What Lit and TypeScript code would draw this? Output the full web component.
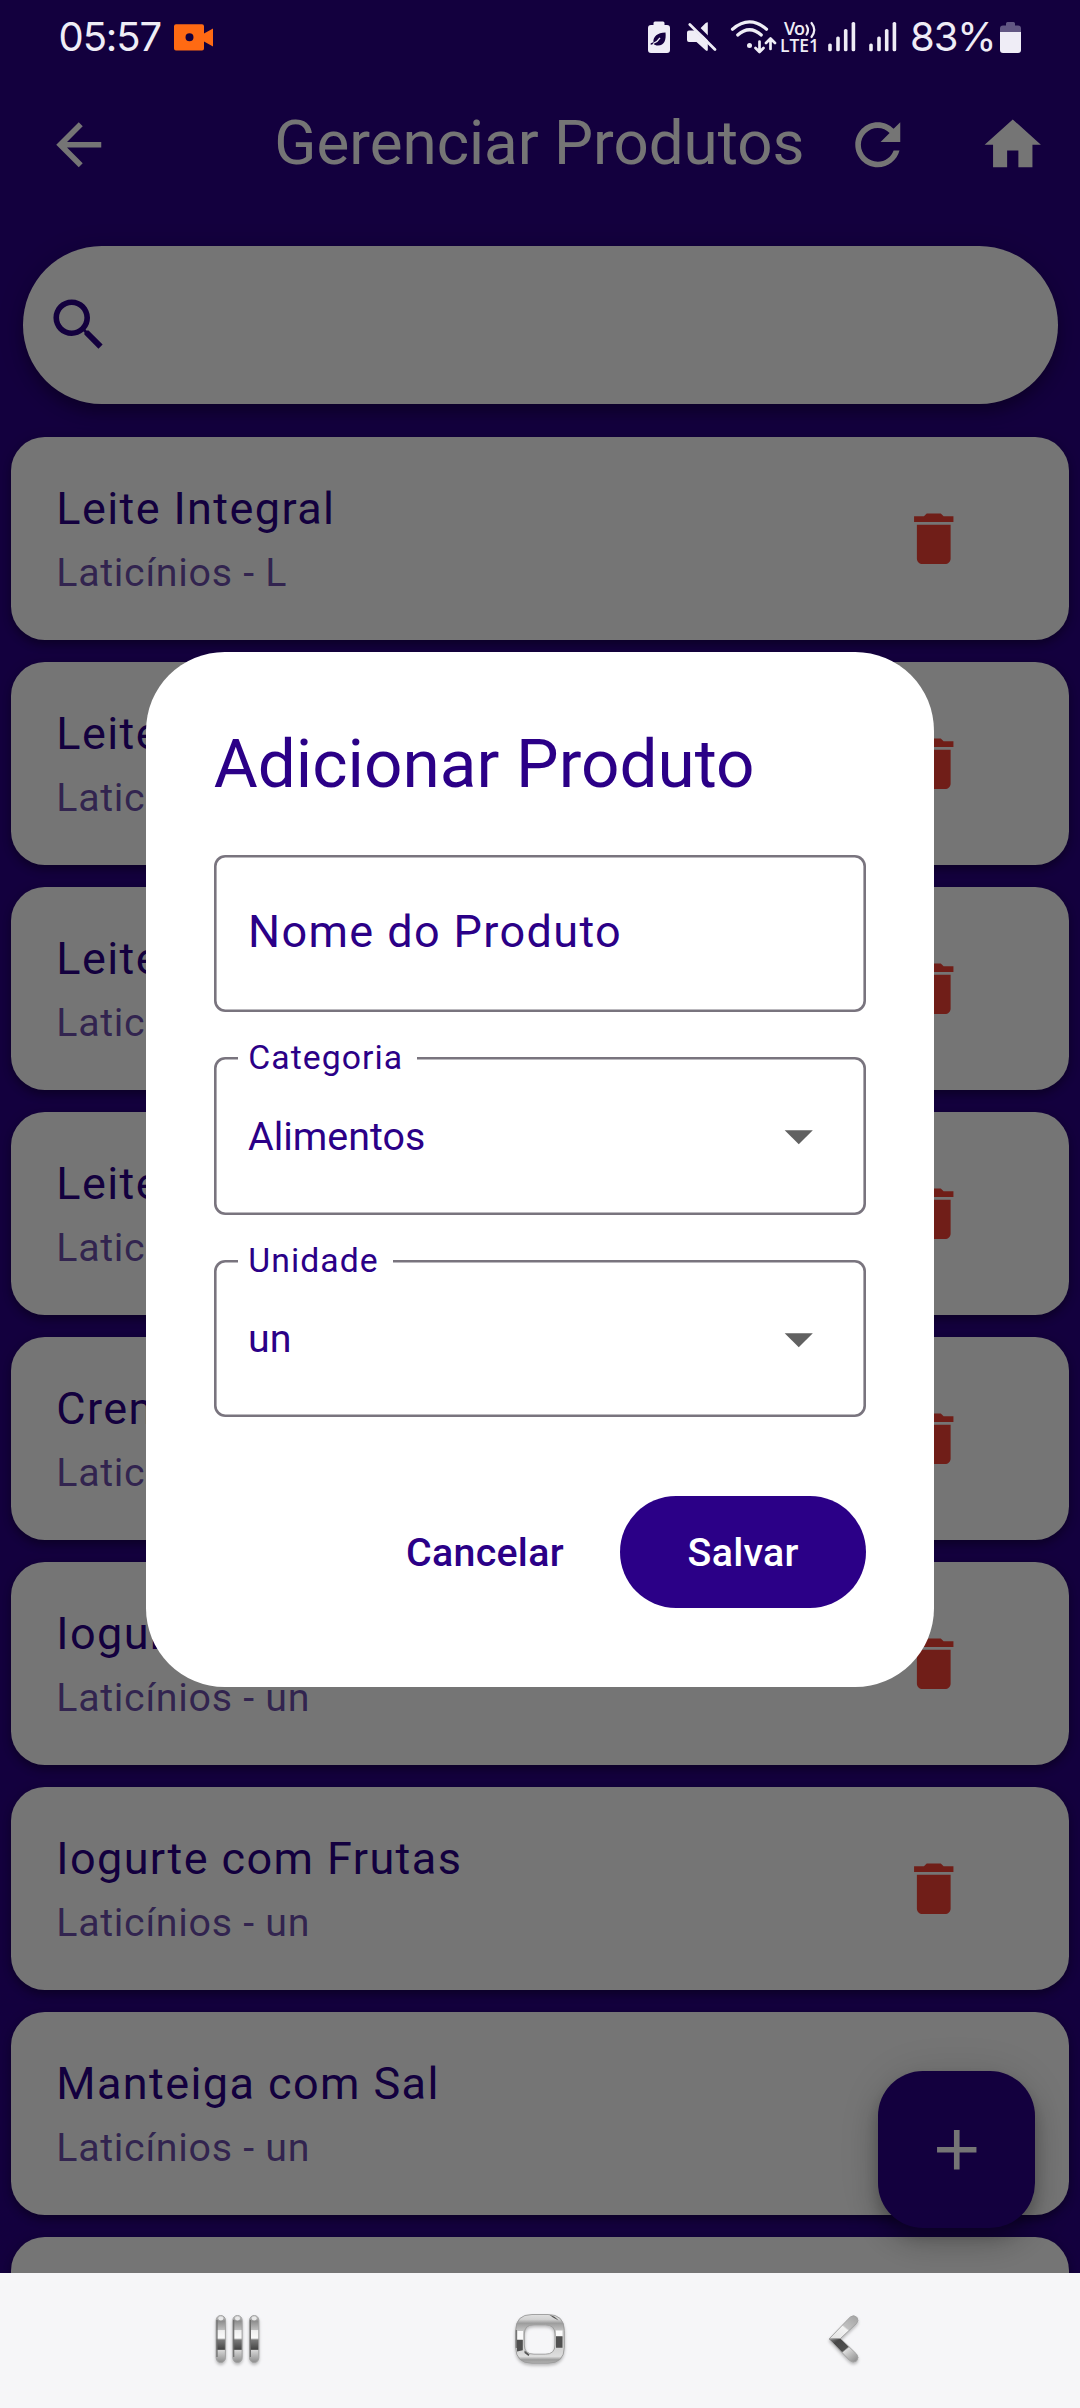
import { LitElement, html, css, svg } from "lit";
import { customElement, property } from "lit/decorators.js";

const ICONS: Record<string, string> = {
  back: "M20 11H7.83l5.59-5.59L12 4l-8 8 8 8 1.41-1.41L7.83 13H20v-2z",
  refresh:
    "M17.65 6.35C16.2 4.9 14.21 4 12 4c-4.42 0-7.99 3.58-7.99 8s3.57 8 7.99 8c3.73 0 6.84-2.55 7.73-6h-2.08c-.82 2.33-3.04 4-5.65 4-3.31 0-6-2.69-6-6s2.69-6 6-6c1.66 0 3.14.69 4.22 1.78L13 11h7V4l-2.35 2.35z",
  home: "M10 20v-6h4v6h5v-8h3L12 3 2 12h3v8z",
  search:
    "M15.5 14h-.79l-.28-.27C15.41 12.59 16 11.11 16 9.5 16 5.91 13.09 3 9.5 3S3 5.91 3 9.5 5.91 16 9.5 16c1.61 0 3.09-.59 4.23-1.57l.27.28v.79l5 4.99L20.49 19l-4.99-5zm-6 0C7.01 14 5 11.99 5 9.5S7.01 5 9.5 5 14 7.01 14 9.5 11.99 14 9.5 14z",
  delete: "M6 19c0 1.1.9 2 2 2h8c1.1 0 2-.9 2-2V7H6v12zM19 4h-3.5l-1-1h-5l-1 1H5v2h14V4z",
  add: "M19 13h-6v6h-2v-6H5v-2h6V5h2v6h6v2z",
  drop: "M7 10l5 5 5-5z",
};

@customElement("md-icon")
export class MdIcon extends LitElement {
  @property() name = "";
  static styles = css`
    :host { display: block; flex: none; width: 67.5px; height: 67.5px; }
    .glyph { display: block; width: 100%; height: 100%; fill: currentColor; }
  `;
  render() {
    return html`<svg class="glyph" viewBox="0 0 24 24"><path d=${ICONS[this.name]}></path></svg>`;
  }
}

@customElement("status-bar")
export class StatusBar extends LitElement {
  static styles = css`
    :host {
      display: flex; align-items: center; justify-content: space-between; height: 66px;
      padding: 0 50px 0 58.5px; color: #efedf6; box-sizing: border-box;
      font: 400 40px/66px Inter, "Open Sans", sans-serif;
    }
    .side { display: flex; align-items: center; height: 66px; }
    .time { padding-top: 7px; width: 109.5px; letter-spacing: -1.1px; }
    .percent { padding-top: 7px; width: 86px; letter-spacing: -1.1px; }
    .slice { display: block; height: 66px; flex: none; }
    .vo { font: 600 18px "Open Sans", "Noto Sans", sans-serif; fill: #efedf6; }
    .lte { font: 600 17.5px "Open Sans", "Noto Sans", sans-serif; fill: #efedf6; }
  `;
  private bars(x: number) {
    return svg`<g fill="#efedf6">
      <rect x=${x} y="43.5" width="3.6" height="7.8" rx="1.6"></rect>
      <rect x=${x + 8} y="36.5" width="3.6" height="14.8" rx="1.6"></rect>
      <rect x=${x + 15.7} y="29" width="3.6" height="22.3" rx="1.6"></rect>
      <rect x=${x + 23.4} y="22" width="3.6" height="29.3" rx="1.6"></rect></g>`;
  }
  render() {
    return html`
      <div class="side">
        <span class="time">05:57</span>
        <svg class="slice" width="50" viewBox="168 0 50 66">
          <path fill="#ff6a13" fill-rule="evenodd"
            d="M176 24.3h26a2 2 0 0 1 2 2v7.2l9-5v18l-9-5v7a2 2 0 0 1-2 2h-26a2 2 0 0 1-2-2v-22.200a2 2 0 0 1 2-2zM189.500 33.300a4 4 0 1 0 0 8 4 4 0 0 0 0-8z"></path>
        </svg>
      </div>
      <div class="side">
        <svg class="slice" width="40" viewBox="640 0 40 66">
          <path fill="#efedf6" d="M655 21.500h8q1.500 0 1.500 1.500v2h2.500q3 0 3 3v22q0 3-3 3h-16q-3 0-3-3v-22q0-3 3-3h2.500v-2q0-1.500 1.500-1.500z"></path>
          <path fill="#150040" d="M665.500 32.500c.8 7-1 13-7.500 13-2 0-3.600-.6-4.700-1.800-.9.500-1.600.9-2.600 1.100v-1.500c1-.3 2-.7 2.700-1.300-.2-5.200 3.800-9.300 12.100-9.500z"></path>
          <path fill="none" stroke="#efedf6" stroke-width="1.300" d="M653 43.500c3-1.200 5.400-3 7-5.700"></path>
        </svg>
        <svg class="slice" width="44" viewBox="680 0 44 66">
          <path fill="#efedf6" d="M707.800 22.600v21.200L698.700 30l7-6.900q2.100-1.300 2.100-.5zM689 30.500h5.500l13.300 13v6q0 2.500-2.200.8l-9.100-8.300H689q-2 0-2-2v-7.500q0-2 2-2z"></path>
          <path stroke="#150040" stroke-width="3.500" d="M692 22l26 26"></path>
          <path stroke="#efedf6" stroke-width="2.800" stroke-linecap="round" d="M689.800 24.600l25.200 25"></path>
        </svg>
        <svg class="slice" width="54" viewBox="724 0 54 66">
          <g fill="none" stroke="#efedf6" stroke-width="3.200" stroke-linecap="round">
            <path d="M732.500 29.200q17-14.600 34 0"></path>
            <path d="M737.700 35q11.800-10.500 23.600 0"></path>
          </g>
          <circle cx="749.500" cy="45.500" r="2.500" fill="#efedf6"></circle>
          <path fill="none" stroke="#efedf6" stroke-width="2.700" stroke-linecap="round" stroke-linejoin="round"
            d="M759.500 41.500v10M755.500 48l4 4 4-4M770.500 49V39.500M766 43l4.500-4.500 4.500 4.500"></path>
        </svg>
        <svg class="slice" width="44" viewBox="778 0 44 66">
          <text class="vo" x="784" y="35.300" textLength="21">Vo</text>
          <path fill="none" stroke="#efedf6" stroke-width="2.200" stroke-linecap="round" d="M806.500 25.500q3 4.500 0 9M811.500 23q5.500 7 0 14"></path>
          <text class="lte" x="780" y="52" textLength="39" lengthAdjust="spacingAndGlyphs">LTE1</text>
        </svg>
        <svg class="slice" width="41" viewBox="822 0 41 66">${this.bars(828.2)}</svg>
        <svg class="slice" width="47" viewBox="863 0 47 66">${this.bars(869.2)}</svg>
        <span class="percent">83%</span>
        <svg class="slice" width="34" viewBox="996 0 34 66">
          <path fill="#625783" d="M1007.500 22h6q1.500 0 1.500 1.500v2h3q3 0 3 3v4h-21v-4q0-3 3-3h3v-2q0-1.500 1.500-1.500z"></path>
          <path fill="#efedf6" d="M1000 32h21v18q0 3-3 3h-15q-3 0-3-3z"></path>
        </svg>
      </div>
    `;
  }
}

@customElement("product-card")
export class ProductCard extends LitElement {
  @property() name = "";
  @property() detail = "";
  static styles = css`
    :host {
      display: flex; align-items: center; justify-content: space-between; flex: none;
      height: 202.5px; box-sizing: border-box; padding: 0 101.25px 0 45px; border-radius: 33.75px;
      background: #fff; color: #2b0087;
      box-shadow: 0 5px 8px rgba(0, 0, 0, 0.28), 0 2px 14px rgba(0, 0, 0, 0.14);
    }
    .texts { display: flex; flex-direction: column; gap: 3px; padding-bottom: 1px; }
    .name { font-size: 45px; line-height: 67.5px; letter-spacing: 1.406px; white-space: nowrap; }
    .detail { font-size: 39.375px; line-height: 56.25px; letter-spacing: 0.703px; color: rgba(43, 0, 135, 0.7); white-space: nowrap; }
    .trash { color: #f44336; }
  `;
  render() {
    return html`
      <div class="texts">
        <span class="name">${this.name}</span>
        <span class="detail">${this.detail}</span>
      </div>
      <md-icon class="trash" name="delete"></md-icon>
    `;
  }
}

@customElement("outlined-field")
export class OutlinedField extends LitElement {
  @property() label = "";
  @property() value = "";
  static styles = css`
    :host { display: block; height: 157.5px; }
    .box {
      display: flex; align-items: center; justify-content: space-between; height: 157.5px; margin: 0;
      box-sizing: border-box; box-shadow: inset 0 0 0 2.6px #79747e; border-radius: 11.25px;
      padding: 0 33.75px 0 34.25px; min-width: 0; position: relative;
    }
    .floating {
      position: absolute; left: 24px; top: -19px; padding: 0 14px 0 10.5px; background: #fff;
      font-size: 33.75px; line-height: 40px; letter-spacing: 1.055px;
    }
    .placeholder { font-size: 45px; letter-spacing: 1.38px; line-height: 60px; padding-bottom: 3px; }
    .value { font-size: 39.375px; line-height: 56px; padding-top: 1.5px; }
    .arrow { color: #616161; }
  `;
  render() {
    if (!this.value) {
      return html`<div class="box"><span class="placeholder">${this.label}</span></div>`;
    }
    return html`
      <div class="box">
        <span class="floating">${this.label}</span>
        <span class="value">${this.value}</span>
        <md-icon class="arrow" name="drop"></md-icon>
      </div>
    `;
  }
}

const RING =
  "M22 5.500h16q16.300 0 16.300 16v16.700q0 16-16.300 16H22q-16.300 0-16.300-16V21.500q0-16 16.300-16zM24 15.800q-9.700 0-9.700 9.200v11q0 9.200 9.700 9.200h11.300q9.700 0 9.700-9.200V25q0-9.200-9.700-9.200z";

@customElement("nav-bar")
export class NavBar extends LitElement {
  static styles = css`
    :host {
      display: flex; align-items: center; height: 135px; box-sizing: border-box; padding: 0 86px 4px;
      background: #f6f6f8;
    }
    .slot { flex: 1; display: flex; justify-content: center; }
    .glyph { display: block; filter: drop-shadow(0 2px 1.5px rgba(0, 0, 0, 0.25)); }
  `;
  private bar(x: number) {
    return svg`<rect x=${x} y="6.5" width="9.200" height="47" rx="4.600" fill="url(#chrome)" stroke="#a2a2a2" stroke-width="1"></rect>
      <path d="M${x + 0.8} 11v37" stroke="#6d6d6d" stroke-width="1.200"></path>
      <ellipse cx=${x + 4.6} cy="9.500" rx="2.500" ry="2" fill="#e9e9e9"></ellipse>`;
  }
  render() {
    return html`
      <div class="slot">
        <svg class="glyph" width="60" height="60" viewBox="0 0 60 60">
          <defs>
            <linearGradient id="chrome" x1="0" y1="0" x2="0" y2="1">
              <stop offset="0" stop-color="#d8d8d8"></stop><stop offset=".12" stop-color="#8e8e8e"></stop>
              <stop offset=".3" stop-color="#bdbdbd"></stop><stop offset=".32" stop-color="#eeeeee"></stop>
              <stop offset=".48" stop-color="#fafafa"></stop><stop offset=".52" stop-color="#7a7a7a"></stop>
              <stop offset=".72" stop-color="#454545"></stop><stop offset=".74" stop-color="#d6d6d6"></stop>
              <stop offset="1" stop-color="#8c8c8c"></stop>
            </linearGradient>
          </defs>
          ${this.bar(9.2)}${this.bar(25.9)}${this.bar(42.6)}
        </svg>
      </div>
      <div class="slot">
        <svg class="glyph" width="60" height="60" viewBox="0 0 60 60">
          <defs>
            <linearGradient id="ring" x1="0" y1="0" x2="0" y2="1">
              <stop offset="0" stop-color="#e0e0e0"></stop><stop offset=".1" stop-color="#d2d2d2"></stop>
              <stop offset=".18" stop-color="#9c9c9c"></stop><stop offset=".33" stop-color="#c4c4c4"></stop>
              <stop offset=".75" stop-color="#d6d6d6"></stop><stop offset=".86" stop-color="#dedede"></stop>
              <stop offset=".93" stop-color="#9b9b9b"></stop><stop offset="1" stop-color="#b4b4b4"></stop>
            </linearGradient>
            <clipPath id="band"><path clip-rule="evenodd" d=${RING}></path></clipPath>
          </defs>
          <path fill="url(#ring)" fill-rule="evenodd" d=${RING}></path>
          <g clip-path="url(#band)">
            <path fill="#fafafa" d="M7.500 22h5.500v9H7.500zM46 21.500h6.500v6H46z"></path>
            <path fill="#505050" d="M7 30.800h5.800v10.400L7 42.400zM46 27.200h6.500v11.600H46z"></path>
            <path fill="#555555" d="M39 5.500q6 1.500 9.500 6L43 8.500zM14.500 41.500l5 4-1 1.500-4-3z"></path>
          </g>
          <path fill="none" stroke="#9a9a9a" stroke-width=".9" d=${RING}></path>
          <path stroke="#6d6d6d" stroke-width="1.200" d="M6.300 21v18"></path>
        </svg>
      </div>
      <div class="slot">
        <svg class="glyph" width="60" height="60" viewBox="0 0 60 60">
          <defs>
            <linearGradient id="arm" x1="1" y1="0" x2="0" y2="1">
              <stop offset="0" stop-color="#a2a2a2"></stop><stop offset=".45" stop-color="#c0c0c0"></stop>
              <stop offset=".5" stop-color="#f2f2f2"></stop><stop offset="1" stop-color="#e2e2e2"></stop>
            </linearGradient>
            <linearGradient id="leg" x1="0" y1="0" x2="1" y2="1">
              <stop offset="0" stop-color="#8a8a8a"></stop><stop offset=".2" stop-color="#474747"></stop>
              <stop offset=".5" stop-color="#505050"></stop><stop offset=".54" stop-color="#dcdcdc"></stop>
              <stop offset="1" stop-color="#858585"></stop>
            </linearGradient>
          </defs>
          <path fill="url(#arm)" stroke="#a2a2a2" stroke-width="1" d="M16 30L37.500 7.800q3.500-2.500 6.500.7 2 3-.5 6L27.500 29.500z"></path>
          <path fill="url(#leg)" stroke="#a2a2a2" stroke-width="1" d="M16 30l11.500-.5L43.500 45q3 3.500 0 7-3.500 2.500-7-.7z"></path>
        </svg>
      </div>
    `;
  }
}

const PRODUCTS = [
  ["Leite Integral", "Laticínios - L"],
  ["Leite", "Laticínios"],
  ["Leite", "Laticínios"],
  ["Leite", "Laticínios"],
  ["Creme", "Laticínios"],
  ["Iogurte", "Laticínios - un"],
  ["Iogurte com Frutas", "Laticínios - un"],
  ["Manteiga com Sal", "Laticínios - un"],
  ["", ""],
];

@customElement("app-root")
export class AppRoot extends LitElement {
  static styles = css`
    :host {
      display: grid; grid-template: 66px 2207px 135px / 1080px; width: 1080px; height: 2408px;
      overflow: hidden; position: relative; background: #2b0087; font-family: Roboto, sans-serif;
    }
    .status { grid-area: 1 / 1; z-index: 3; }
    .screen { grid-area: 2 / 1; display: flex; flex-direction: column; overflow: hidden; position: relative; }
    .nav { grid-area: 3 / 1; z-index: 3; }
    .appbar { display: flex; align-items: center; height: 157.5px; flex: none; color: #fff; }
    .lead { width: 157.5px; display: flex; justify-content: center; }
    .title { flex: 1; text-align: right; font-size: 61.875px; line-height: 80px; padding: 0 5.500px 3px 0; white-space: nowrap; }
    .action { width: 135px; display: flex; justify-content: center; }
    .search {
      display: flex; align-items: center; flex: none; height: 157.5px; margin: 22.5px 22.5px 0; padding: 0 22.5px;
      box-sizing: border-box; border-radius: 78.75px; background: #fff; color: #2b0087;
      box-shadow: 0 9px 14px rgba(0, 0, 0, 0.26), 0 3px 28px rgba(0, 0, 0, 0.14);
    }
    .list { display: flex; flex-direction: column; gap: 22.5px; padding: 33.75px 11.25px 0; }
    .fab {
      position: absolute; right: 45px; bottom: 45px; width: 157.5px; height: 157.5px; border-radius: 45px;
      display: flex; align-items: center; justify-content: center; background: #2b0087; color: #fff;
      box-shadow: 0 17px 28px rgba(0, 0, 0, 0.16), 0 3px 50px rgba(0, 0, 0, 0.12), 0 8px 14px rgba(0, 0, 0, 0.18);
    }
    .scrim {
      grid-area: 1 / 1 / 3 / 2; z-index: 2; display: flex; align-items: center; justify-content: center;
      padding-top: 66px; box-sizing: border-box; background: rgba(0, 0, 0, 0.54);
    }
    .dialog {
      width: 787.5px; height: 1035px; box-sizing: border-box; padding: 66.5px 67.5px; border-radius: 78.75px;
      background: #fff; color: #2b0087; display: flex; flex-direction: column;
    }
    .heading { margin: 0; font-weight: 400; font-size: 67.5px; line-height: 90px; white-space: nowrap; }
    .fields { display: flex; flex-direction: column; gap: 45px; padding: 46px 0 78.75px; }
    .actions { display: flex; justify-content: flex-end; align-items: center; gap: 22.5px; }
    .button {
      height: 112.5px; border: 0; border-radius: 56.25px; font: 500 39.375px/56px Roboto, sans-serif;
      letter-spacing: 0.28px; padding: 2px 67.5px 0; background: #2b0087; color: #fff;
    }
    .text { background: none; color: #2b0087; padding: 2px 33.75px 0; }
  `;
  render() {
    return html`
      <status-bar class="status"></status-bar>
      <main class="screen">
        <header class="appbar">
          <div class="lead"><md-icon name="back"></md-icon></div>
          <div class="title">Gerenciar Produtos</div>
          <div class="action"><md-icon name="refresh"></md-icon></div>
          <div class="action"><md-icon name="home"></md-icon></div>
        </header>
        <div class="search"><md-icon name="search"></md-icon></div>
        <div class="list">
          ${PRODUCTS.map(([name, detail]) => html`<product-card .name=${name} .detail=${detail}></product-card>`)}
        </div>
        <div class="fab"><md-icon name="add"></md-icon></div>
      </main>
      <div class="scrim">
        <section class="dialog">
          <h2 class="heading">Adicionar Produto</h2>
          <div class="fields">
            <outlined-field label="Nome do Produto"></outlined-field>
            <outlined-field label="Categoria" value="Alimentos"></outlined-field>
            <outlined-field label="Unidade" value="un"></outlined-field>
          </div>
          <div class="actions">
            <button class="button text">Cancelar</button>
            <button class="button">Salvar</button>
          </div>
        </section>
      </div>
      <nav-bar class="nav"></nav-bar>
    `;
  }
}
